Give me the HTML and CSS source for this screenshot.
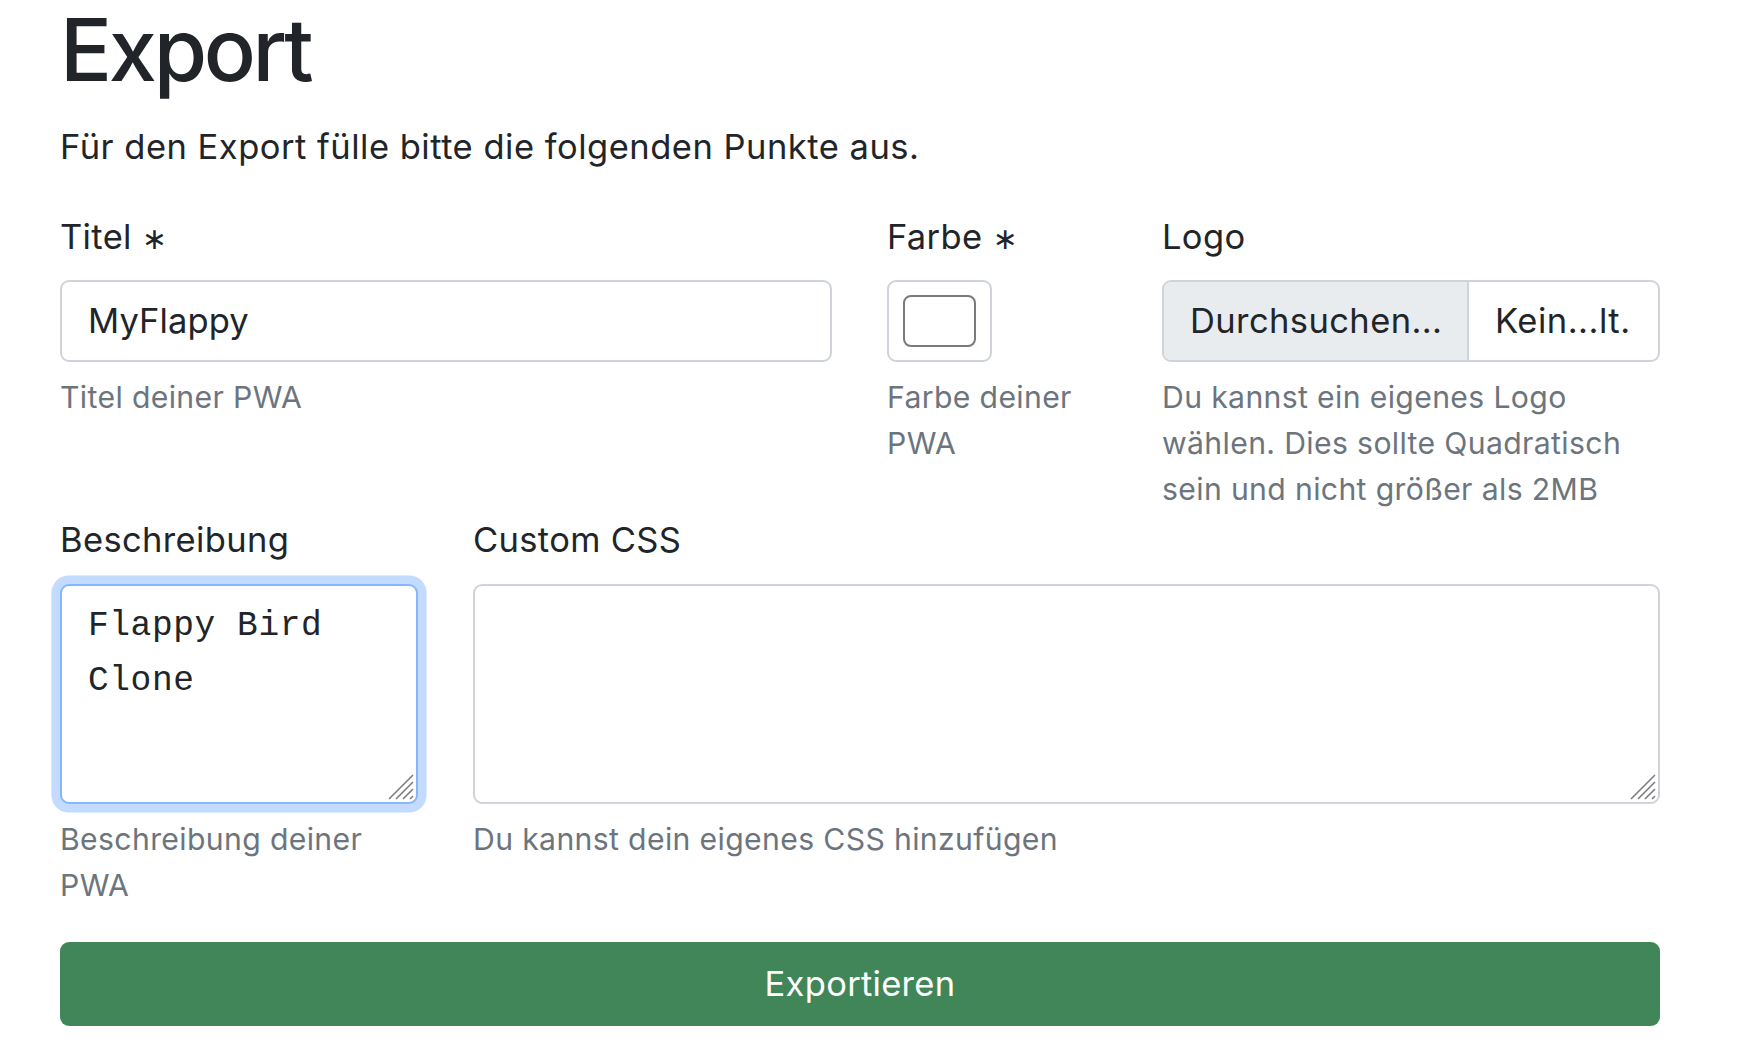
FILE: index.html
```html
<!DOCTYPE html>
<html lang="de">
<head>
<meta charset="utf-8">
<title>Export</title>
<link rel="stylesheet" href="styles.css">
</head>
<body>
<main class="page">
  <h1 class="title">Export</h1>
  <p class="intro">Für den Export fülle bitte die folgenden Punkte aus.</p>

  <div class="row row-top">
    <div class="field">
      <label class="label" for="t">Titel <span class="req">∗</span></label>
      <input class="control" id="t" type="text" value="MyFlappy">
      <div class="help">Titel deiner PWA</div>
    </div>
    <div class="field">
      <div class="label">Farbe <span class="req">∗</span></div>
      <div class="color-box"><div class="swatch"></div></div>
      <div class="help">Farbe deiner PWA</div>
    </div>
    <div class="field">
      <div class="label">Logo</div>
      <div class="file">
        <div class="file-btn">Durchsuchen...</div>
        <div class="file-name">Kein...lt.</div>
      </div>
      <div class="help">Du kannst ein eigenes Logo wählen. Dies sollte Quadratisch sein und nicht größer als 2MB</div>
    </div>
  </div>

  <div class="row row-bottom">
    <div class="field">
      <label class="label" for="d">Beschreibung</label>
      <div class="area-wrap">
        <textarea class="area focus" id="d">Flappy Bird Clone</textarea>
        <svg class="grip" width="28" height="28" viewBox="0 0 28 28" aria-hidden="true">
          <path d="M2 26 L26 2 M9 26 L26 9 M16 26 L26 16 M23 26 L26 23" stroke="#7d7d7d" stroke-width="1.6" fill="none"/>
        </svg>
      </div>
      <div class="help">Beschreibung deiner PWA</div>
    </div>
    <div class="field">
      <label class="label" for="c">Custom CSS</label>
      <div class="area-wrap">
        <textarea class="area" id="c"></textarea>
        <svg class="grip" width="28" height="28" viewBox="0 0 28 28" aria-hidden="true">
          <path d="M2 26 L26 2 M9 26 L26 9 M16 26 L26 16 M23 26 L26 23" stroke="#7d7d7d" stroke-width="1.6" fill="none"/>
        </svg>
      </div>
      <div class="help">Du kannst dein eigenes CSS hinzufügen</div>
    </div>
  </div>

  <button class="export" type="button">Exportieren</button>
</main>
</body>
</html>
```

FILE: styles.css
```css
html, body {
  margin: 0;
  padding: 0;
  background: #fff;
}

body {
  font-family: Inter, "Liberation Sans", sans-serif;
  font-size: 34.5px;
  line-height: 1.5;
  color: #212529;
}

.page {
  width: 1600px;
  margin-left: 60px;
}

.title {
  margin: -2px 0 19.5px;
  font-size: 86.4px;
  font-weight: 500;
  line-height: 1.2;
  letter-spacing: -3.3px;
}

.intro {
  margin: 0 0 38px;
  letter-spacing: 0.5px;
}

.row {
  display: grid;
  column-gap: 55px;
}

.row-top {
  grid-template-columns: 772px 220px 498px;
  margin-bottom: 2px;
}

.row-bottom {
  grid-template-columns: 358px 1187px;
  margin-bottom: 33.5px;
}

.field {
  display: flex;
  flex-direction: column;
  min-width: 0;
}

.label {
  display: block;
  margin-bottom: 17.3px;
  letter-spacing: 0.35px;
}

.req {
  font-family: "DejaVu Sans", sans-serif;
  font-size: 30px;
}

.control {
  box-sizing: border-box;
  height: 82px;
  width: 100%;
  margin: 0;
  padding: 13px 26px;
  border: 2px solid #ced4da;
  border-radius: 9px;
  font: inherit;
  color: #212529;
  letter-spacing: 0.1px;
  outline: none;
}

.help {
  margin-top: 12.5px;
  font-size: 30.2px;
  line-height: 46px;
  color: #6c757d;
  letter-spacing: 0.35px;
}

.color-box {
  box-sizing: border-box;
  width: 105px;
  height: 82px;
  padding: 13px 14px;
  border: 2px solid #ced4da;
  border-radius: 9px;
}

.swatch {
  box-sizing: border-box;
  width: 100%;
  height: 100%;
  border: 2px solid #7a7a7a;
  border-radius: 8px;
  background: #fff;
}

.file {
  box-sizing: border-box;
  display: flex;
  height: 82px;
  border: 2px solid #ced4da;
  border-radius: 9px;
  overflow: hidden;
}

.file-btn {
  padding: 13px 26px;
  width: 251px;
  background: #e9ecef;
  border-right: 2px solid #ced4da;
  letter-spacing: 0.4px;
  white-space: nowrap;
}

.file-name {
  padding: 13px 26px;
  letter-spacing: 0.5px;
  white-space: nowrap;
}

.area-wrap {
  position: relative;
  height: 220px;
}

.area {
  box-sizing: border-box;
  display: block;
  width: 100%;
  height: 220px;
  margin: 0;
  padding: 12px 26px 13px;
  border: 2px solid #ced4da;
  border-radius: 9px;
  font-family: "Liberation Mono", monospace;
  font-size: 34.5px;
  line-height: 55px;
  letter-spacing: 0.6px;
  color: #212529;
  outline: none;
  resize: none;
}

.area.focus {
  border-color: #86b7fe;
  box-shadow: 0 0 0 8.6px rgba(13, 110, 253, 0.25);
}

.grip {
  position: absolute;
  right: 3px;
  bottom: 3px;
}

.export {
  display: block;
  box-sizing: border-box;
  width: 100%;
  height: 84px;
  margin: 0;
  padding: 0;
  border: 0;
  border-radius: 9px;
  background: #418658;
  color: #fff;
  font-family: Inter, "Liberation Sans", sans-serif;
  font-size: 34.5px;
  letter-spacing: 0.3px;
}
```
